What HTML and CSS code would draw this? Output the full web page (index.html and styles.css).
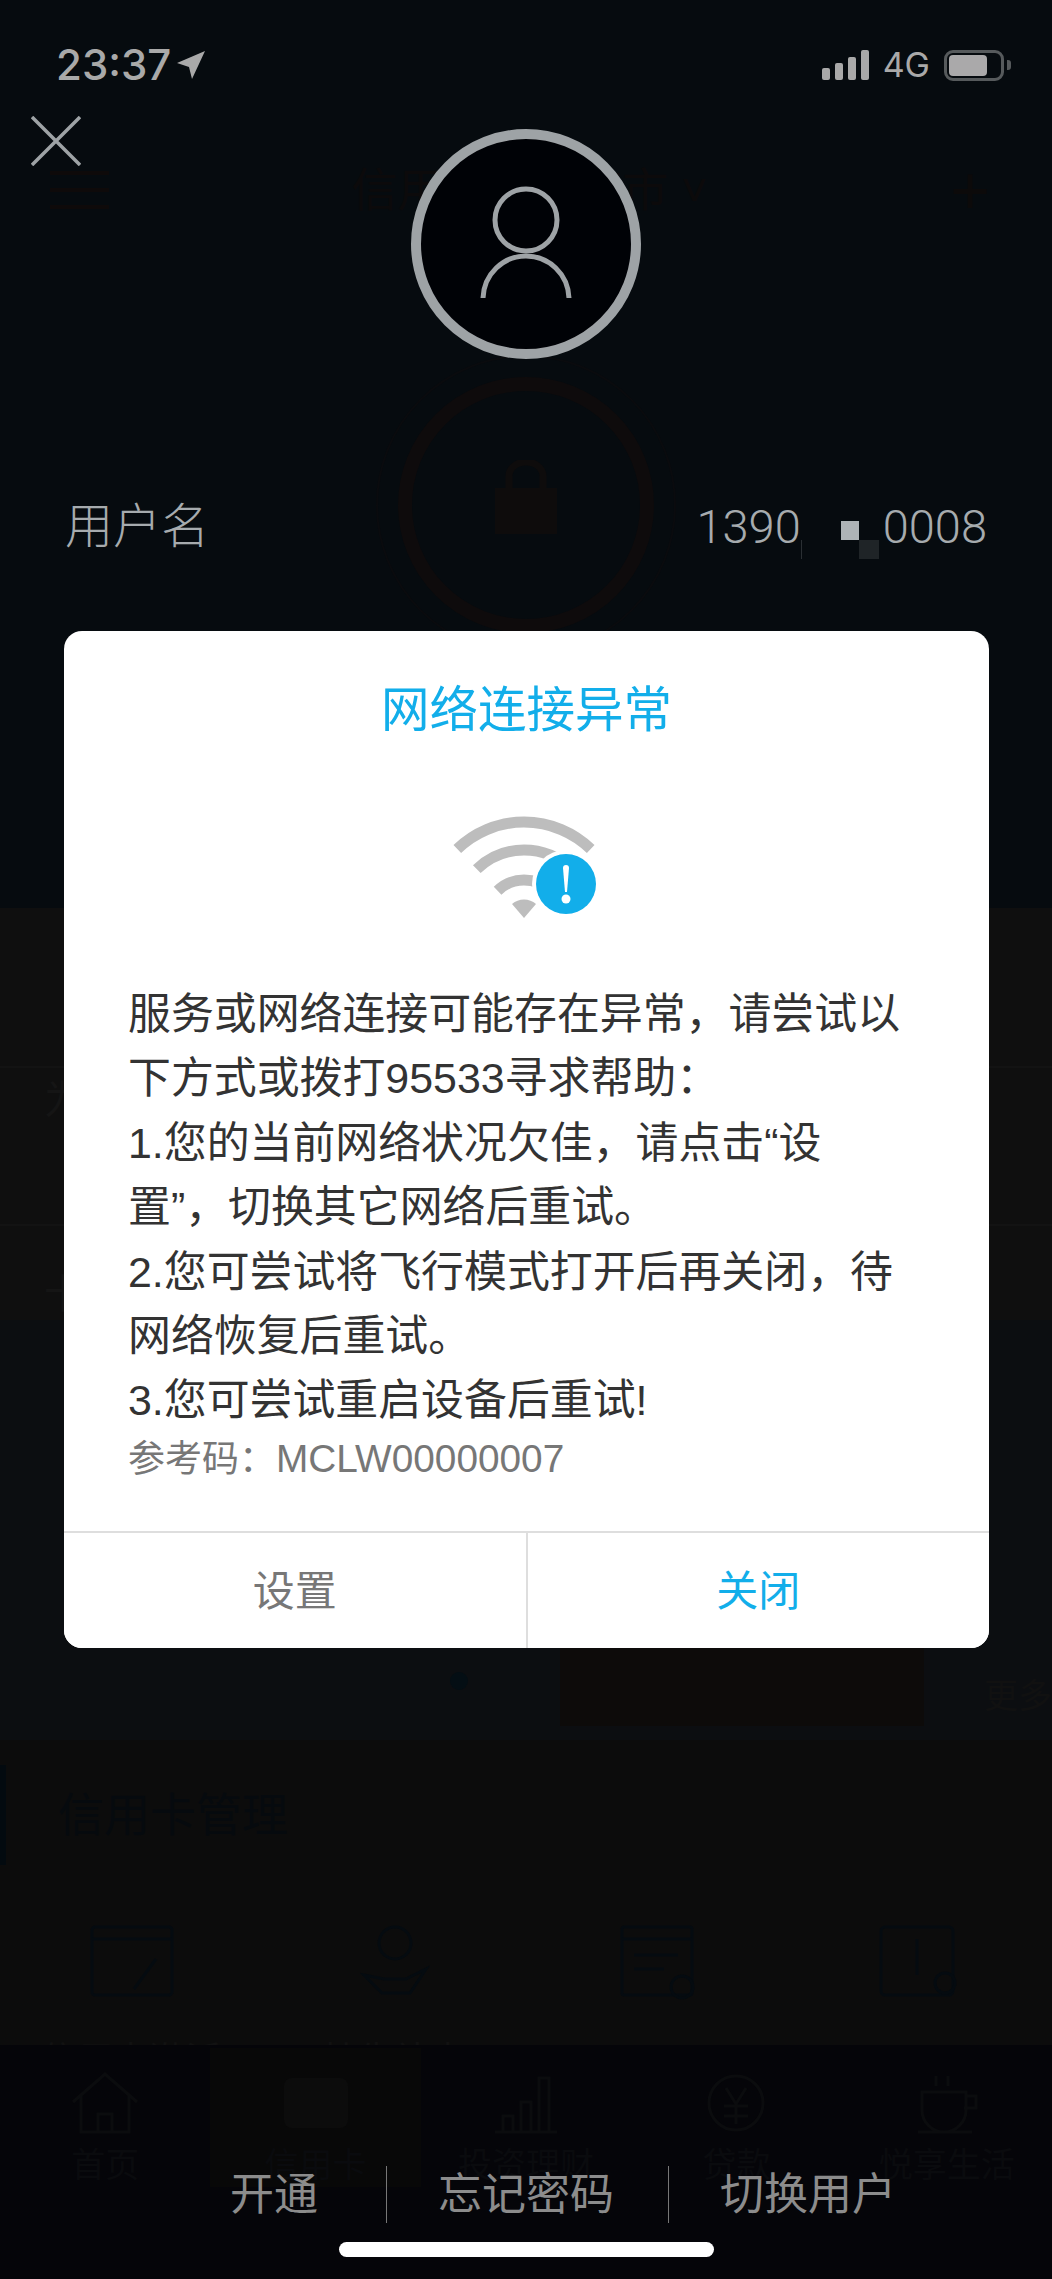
FILE: index.html
```html
<!DOCTYPE html>
<html lang="zh-CN">
<head>
<meta charset="utf-8">
<title>网络连接异常</title>
<link rel="stylesheet" href="styles.css">
</head>
<body>
<div class="phone">
  <div class="backdrop">
    <section class="bd-top">
      <header class="bd-header">
        <div class="burger"><i></i><i></i><i></i></div>
        <div class="bd-title">信用卡 · 北京市 ˅</div>
        <div class="bd-plus">+</div>
      </header>
      <div class="ring-outer">
        <div class="ring-inner">
          <svg class="lock" width="66" height="76" viewBox="0 0 66 76"><path d="M16 28V16a17 14 0 0 1 34 0v12" fill="none" stroke="#0e0c0c" stroke-width="7"/><rect x="2" y="28" width="62" height="46" fill="#0e0c0c"/></svg>
        </div>
      </div>
    </section>
    <section class="bd-mid">
      <div class="bd-row bd-row-first"><span>为</span></div>
      <div class="bd-row bd-row-second"><span>卡</span></div>
    </section>
    <section class="bd-banner">
      <i class="banner-dot"></i>
      <div class="banner-img"></div>
      <span class="banner-more">更多</span>
    </section>
    <section class="bd-section">
      <h2 class="bd-h">信用卡管理</h2>
      <div class="bd-grid">
        <div class="bd-cell"><svg width="84" height="72" viewBox="0 0 84 72" fill="none" stroke="#050b10" stroke-width="3"><rect x="2" y="2" width="80" height="68" rx="3"/><path d="M2 14h80M44 64l22-30"/></svg><span>信用卡激活</span></div>
        <div class="bd-cell"><svg width="70" height="72" viewBox="0 0 70 72" fill="none" stroke="#050b10" stroke-width="3"><circle cx="35" cy="18" r="16"/><path d="M4 50l18 18h28l16-24-20 10H24z"/></svg><span>挂失补卡</span></div>
        <div class="bd-cell"><svg width="76" height="76" viewBox="0 0 76 76" fill="none" stroke="#050b10" stroke-width="3"><rect x="2" y="2" width="70" height="68" rx="2"/><path d="M2 14h70M14 30h44M14 44h30"/><circle cx="62" cy="62" r="11"/></svg><span>账单查询</span></div>
        <div class="bd-cell"><svg width="84" height="76" viewBox="0 0 84 76" fill="none" stroke="#050b10" stroke-width="3"><rect x="2" y="2" width="72" height="68" rx="4"/><path d="M38 14v36"/><circle cx="66" cy="58" r="10"/></svg><span>额度管理</span></div>
      </div>
    </section>
    <nav class="tabbar">
      <div class="tab"><svg width="66" height="62" viewBox="0 0 66 62" fill="none" stroke="#0b0c0e" stroke-width="3"><path d="M1 30L33 2l32 28M9 24v36h48V24M26 60V42h14v18"/></svg><span>首页</span></div>
      <div class="tab tab-active"><svg width="66" height="62" viewBox="0 0 66 62" fill="#0c0c0c"><rect x="1" y="6" width="64" height="50" rx="8"/></svg><span>信用卡</span></div>
      <div class="tab"><svg width="66" height="62" viewBox="0 0 66 62" fill="none" stroke="#0b0c0e" stroke-width="3"><path d="M2 60h62M10 60V44h10v16M28 60V30h10v30M46 60V6h10v54"/></svg><span>投资理财</span></div>
      <div class="tab"><svg width="60" height="62" viewBox="0 0 60 62" fill="none" stroke="#0b0c0e" stroke-width="3"><circle cx="30" cy="31" r="27"/><path d="M20 16l10 16 10-16M18 34h24M18 44h24M30 32v20"/></svg><span>贷款</span></div>
      <div class="tab"><svg width="70" height="62" viewBox="0 0 70 62" fill="none" stroke="#0b0c0e" stroke-width="3"><path d="M10 20h44v18a20 20 0 0 1-44 0zM54 24h10v12H52M6 60h54M24 4v10M36 4v10"/></svg><span>悦享生活</span></div>
    </nav>
  </div>

  <div class="overlay">
    <div class="status">
      <div class="status-left">
        <span class="time">23:37</span>
        <svg class="loc" width="28" height="28" viewBox="0 0 28 28"><path d="M28 0L0 12l12 4 3 12z" fill="#a9a9a9"/></svg>
      </div>
      <div class="status-right">
        <svg class="signal" width="48" height="30" viewBox="0 0 48 30" fill="#a9a9a9"><rect x="0" y="18" width="8" height="12" rx="2"/><rect x="13" y="13" width="8" height="17" rx="2"/><rect x="26" y="7" width="8" height="23" rx="2"/><rect x="39" y="0" width="8" height="30" rx="2"/></svg>
        <span class="net">4G</span>
        <div class="battery"><i class="battery-fill"></i></div>
        <i class="battery-cap"></i>
      </div>
    </div>

    <div class="head">
      <svg class="close" width="50" height="50" viewBox="0 0 50 50"><path d="M1 1l48 48M49 1L1 49" stroke="#9ea3a6" stroke-width="3.5" fill="none"/></svg>
      <div class="avatar">
        <svg width="100" height="114" viewBox="0 0 100 114" fill="none" stroke="#9ea3a6" stroke-width="5"><circle cx="50" cy="34" r="31"/><path d="M7 112c1-24 20-42 43-42s42 18 43 42"/></svg>
      </div>
    </div>

    <div class="user">
      <span class="user-name">用户名</span>
      <div class="user-num">
        <span>1390</span>
        <svg class="mask" width="82" height="40" viewBox="0 0 82 40"><rect x="0" y="20" width="1" height="19" fill="#2a2f33"/><rect x="40" y="1" width="18" height="19" fill="#aeb3b6"/><rect x="58" y="20" width="20" height="19" fill="#1f2427"/></svg>
        <span>0008</span>
      </div>
    </div>

    <div class="dialog">
      <h1 class="dialog-title">网络连接异常</h1>
      <svg class="wifi" width="160" height="110" viewBox="0 0 160 110">
        <g fill="none" stroke="#bdbdbd" stroke-width="11">
          <path d="M13.3 37A96 96 0 0 1 146.7 37"/>
          <path d="M32.8 57.1A68 68 0 0 1 127.2 57.1"/>
          <path d="M53.6 78.7A38 38 0 0 1 106.4 78.7"/>
        </g>
        <path d="M80 106L68 92A18 18 0 0 1 92 92z" fill="#bdbdbd"/>
        <circle cx="122" cy="72" r="34" fill="#fff"/>
        <circle cx="122" cy="72" r="30" fill="#12aeea"/>
        <path d="M119 56a3 3 0 0 1 6 0l-2 24h-2z" fill="#fff"/>
        <circle cx="122" cy="87" r="4.5" fill="#fff"/>
      </svg>
      <div class="dialog-body">
        <p>服务或网络连接可能存在异常，请尝试以下方式或拨打95533寻求帮助：</p>
        <p>1.您的当前网络状况欠佳，请点击“设<br>置”，切换其它网络后重试。</p>
        <p>2.您可尝试将飞行模式打开后再关闭，待网络恢复后重试。</p>
        <p>3.您可尝试重启设备后重试!</p>
      </div>
      <div class="dialog-code">参考码：<span class="code-num">MCLW00000007</span></div>
      <div class="dialog-foot">
        <button class="btn btn-muted" type="button">设置</button>
        <button class="btn btn-primary" type="button">关闭</button>
      </div>
    </div>

    <div class="links">
      <a class="link">开通</a>
      <a class="link">忘记密码</a>
      <a class="link">切换用户</a>
    </div>
    <div class="home-bar"></div>
  </div>
</div>
</body>
</html>
```

FILE: styles.css
```css
* { box-sizing: border-box; }
html, body { margin: 0; padding: 0; background: #060b0f; }
body { font-family: "Liberation Sans", "Noto Sans CJK SC", sans-serif; }
.phone { position: relative; width: 1052px; height: 2279px; overflow: hidden; }

/* dimmed page behind the modal */
.backdrop { position: absolute; inset: 0; display: flex; flex-direction: column; }
.bd-top { height: 908px; background: #060b0f; padding-top: 166px; flex: none; }
.bd-header { display: flex; align-items: center; justify-content: space-between; height: 48px; padding: 0 62px 0 50px; }
.burger { width: 59px; display: flex; flex-direction: column; gap: 13px; }
.burger i { display: block; height: 4px; background: #0e0a0a; }
.bd-title { font-size: 46px; color: #0c0a0b; line-height: 48px; white-space: nowrap; }
.bd-plus { font-size: 68px; color: #0c0a0a; line-height: 48px; font-weight: 300; }
.ring-outer { width: 300px; height: 300px; margin: 141px auto 0; border: 2px solid #0a0b0e; border-radius: 50%; display: flex; align-items: center; justify-content: center; }
.ring-inner { width: 256px; height: 256px; border: 14px solid #0e0b0c; border-radius: 50%; display: flex; align-items: center; justify-content: center; padding-bottom: 14px; }
.bd-mid { height: 412px; overflow: hidden; background: #0f0f0f; flex: none; padding-top: 158px; font-size: 40px; color: #151515; }
.bd-row { padding-left: 44px; }
.bd-row-first { height: 160px; border-top: 2px solid #131313; border-bottom: 2px solid #131313; }
.bd-row-second { height: 94px; padding-top: 36px; }
.bd-banner { height: 420px; background: #0c0e11; flex: none; display: flex; align-items: flex-end; padding-left: 450px; }
.banner-dot { width: 18px; height: 18px; border-radius: 50%; background: #040e14; margin-bottom: 50px; }
.banner-img { width: 370px; height: 78px; margin-left: 92px; background: #0d0b0a; margin-bottom: 14px; }
.banner-more { font-size: 34px; color: #111; margin: 0 0 22px 60px; white-space: nowrap; }
.bd-section { flex: 1; min-height: 0; overflow: hidden; background: #0c0c0c; padding-top: 25px; }
.bd-h { margin: 0; height: 100px; border-left: 6px solid #030a0f; padding-left: 52px; font-size: 46px; font-weight: 400; line-height: 100px; color: #060a0e; }
.bd-grid { display: grid; grid-template-columns: repeat(4, 263px); padding-top: 60px; }
.bd-cell { display: flex; flex-direction: column; align-items: center; gap: 34px; font-size: 36px; color: #121212; }
.tabbar { height: 234px; flex: none; background: #050509; display: grid; grid-template-columns: repeat(5, 1fr); align-items: start; padding: 3px 0 0; }
.tab { height: 139px; padding-top: 24px; display: flex; flex-direction: column; align-items: center; gap: 4px; font-size: 34px; color: #0a0b0e; }
.tab-active { background: #080808; }

/* foreground */
.overlay { position: absolute; inset: 0; display: flex; flex-direction: column; }
.status { height: 116px; display: flex; justify-content: space-between; align-items: flex-start; padding: 42px 41px 0 56px; flex: none; }
.status-left { display: flex; align-items: center; gap: 6px; }
.time { font-family: Inter, "Liberation Sans", sans-serif; font-size: 42px; font-weight: 500; line-height: 46px; color: #a9a9a9; }
.status-right { display: flex; align-items: center; height: 46px; }
.net { font-family: Inter, "Liberation Sans", sans-serif; font-size: 34px; line-height: 46px; color: #a9a9a9; margin: 0 14px 0 13px; }
.battery { width: 60px; height: 31px; border: 3px solid #565a5c; border-radius: 9px; padding: 2px; }
.battery-fill { display: block; width: 38px; height: 21px; border-radius: 4px; background: #aaa9aa; }
.battery-cap { display: block; width: 4px; height: 10px; background: #565a5c; margin-left: 3px; border-radius: 0 3px 3px 0; }
.head { display: grid; grid-template-columns: 1fr auto 1fr; flex: none; height: 243px; }
.close { margin-left: 31px; }
.avatar { width: 230px; height: 230px; margin-top: 13px; border: 10px solid #9ea3a6; border-radius: 50%; background: #000206; display: flex; align-items: flex-start; justify-content: center; padding-top: 47px; }
.user { height: 60px; margin-top: 138px; padding: 0 65px; display: flex; justify-content: space-between; align-items: center; flex: none; color: #a6abae; }
.user-name { font-size: 48px; line-height: 60px; font-weight: 300; }
.user-num { display: flex; align-items: center; font-family: Roboto, "Liberation Sans", sans-serif; font-size: 47px; font-weight: 300; line-height: 60px; }
.mask { align-self: flex-start; margin-top: 25px; }

.dialog { width: 925px; height: 1017px; margin: 74px 0 0 64px; background: #fff; border-radius: 18px; overflow: hidden; display: flex; flex-direction: column; flex: none; }
.dialog-title { margin: 45px 0 0; font-size: 48.5px; line-height: 68px; font-weight: 400; text-align: center; color: #12aeea; }
.wifi { display: block; margin: 68px auto 0; flex: none; transform: translateX(-3px); }
.dialog-body { margin-top: 60px; padding: 0 68px 0 64px; font-size: 42.9px; line-height: 64.4px; color: #333; }
.dialog-body p { margin: 0; }
.dialog-code { padding-left: 64px; font-size: 37px; line-height: 52px; color: #777; }
.code-num { font-size: 38.8px; }
.dialog-foot { margin-top: auto; height: 117px; border-top: 2px solid #dedede; display: flex; flex: none; }
.btn { flex: 1; border: 0; background: #fff; padding: 0 0 7px; font: inherit; font-size: 42px; }
.btn + .btn { border-left: 2px solid #dedede; }
.btn-muted { color: #777; }
.btn-primary { color: #12aeea; }

.links { display: flex; height: 57px; margin: 518px 0 0 230px; flex: none; }
.link { display: block; padding: 0 54px 0 51px; font-size: 44px; line-height: 57px; color: #8c8c8c; }
.link:first-child { padding: 0 68px 0 0; }
.link + .link { border-left: 1px solid #777; }
.home-bar { width: 375px; height: 15px; margin: 19px 0 0 339px; background: #fff; border-radius: 8px; flex: none; }
```
